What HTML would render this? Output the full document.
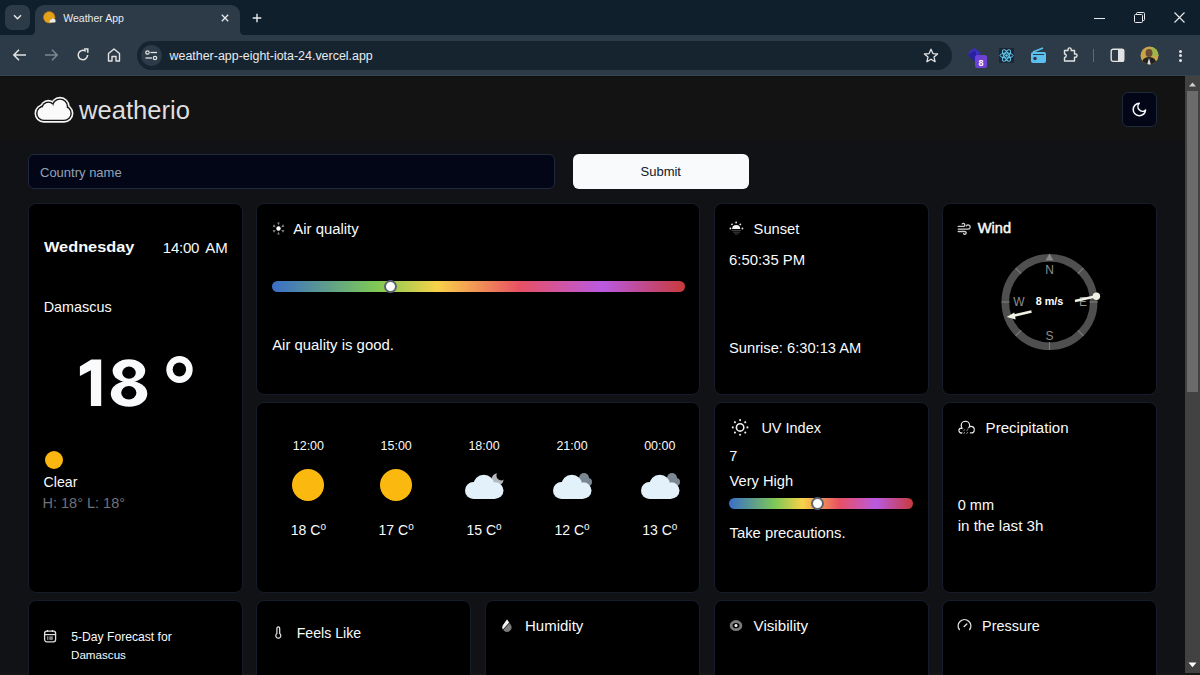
<!DOCTYPE html>
<html><head><meta charset="utf-8"><title>Weather App</title>
<style>
html,body{margin:0;padding:0;width:1200px;height:675px;overflow:hidden;background:#111216}
#root{position:relative;width:1200px;height:675px;overflow:hidden;font-family:"Liberation Sans", sans-serif}
.a{position:absolute;display:block}
.t{position:absolute;white-space:pre;font-family:"Liberation Sans", sans-serif}
</style></head><body><div id="root">
<div class="a" style="left:0px;top:0px;width:1200px;height:35px;background:#0f1f2b"></div>
<div class="a" style="left:5px;top:5px;width:25px;height:25px;background:#2c3b47;border-radius:7px"></div>
<svg class="a" style="left:11px;top:12px" width="13" height="10" viewBox="0 0 13 10"><path d="M3 3.3 L6.5 6.8 L10 3.3" stroke="#e6e6e6" stroke-width="1.5" fill="none"/></svg>
<div class="a" style="left:35px;top:5px;width:205px;height:31px;background:#2c3b47;border-radius:9px 9px 0 0"></div>
<svg class="a" style="left:27px;top:27px" width="9" height="9" viewBox="0 0 9 9"><path d="M0 9 Q9 9 9 0 V9 Z" fill="#2c3b47"/></svg>
<svg class="a" style="left:239px;top:27px" width="9" height="9" viewBox="0 0 9 9"><path d="M9 9 Q0 9 0 0 V9 Z" fill="#2c3b47"/></svg>
<svg class="a" style="left:43px;top:11px" width="13" height="13" viewBox="0 0 13 13"><circle cx="6.2" cy="6.3" r="5.8" fill="#e3a21a"/><circle cx="6.2" cy="6.3" r="5.8" fill="none" stroke="#b07010" stroke-width="0.6"/><path d="M6.5 11.5 Q6.3 8.6 8.6 8.5 Q9.5 7 11 7.8 Q12.8 8 12.6 10 Q12.8 11.5 11.5 11.5 Z" fill="#e8eef2"/></svg>
<div class="t" style="left:63.30px;top:12.91px;font-size:10.5px;line-height:10.5px;color:#e8eaed;font-weight:400;">Weather App</div>
<svg class="a" style="left:221px;top:14px" width="8" height="8" viewBox="0 0 8 8"><path d="M0.8 0.8 L7.2 7.2 M7.2 0.8 L0.8 7.2" stroke="#e8eaed" stroke-width="1.3"/></svg>
<svg class="a" style="left:251.5px;top:12.5px" width="10" height="10" viewBox="0 0 10 10"><path d="M5 0.7 V9.3 M0.7 5 H9.3" stroke="#e8eaed" stroke-width="1.4"/></svg>
<div class="a" style="left:1094px;top:18px;width:11px;height:1px;background:#e8eaed"></div>
<svg class="a" style="left:1134px;top:12px" width="11" height="11" viewBox="0 0 11 11"><rect x="0.5" y="2.5" width="8" height="8" rx="1" fill="none" stroke="#e8eaed" stroke-width="1"/><path d="M2.5 2.5 V1.5 Q2.5 0.5 3.5 0.5 H9.5 Q10.5 0.5 10.5 1.5 V7.5 Q10.5 8.5 9.5 8.5 H8.5" fill="none" stroke="#e8eaed" stroke-width="1"/></svg>
<svg class="a" style="left:1174px;top:12px" width="11" height="11" viewBox="0 0 11 11"><path d="M0.5 0.5 L10.5 10.5 M10.5 0.5 L0.5 10.5" stroke="#e8eaed" stroke-width="1.1"/></svg>
<div class="a" style="left:0px;top:35px;width:1200px;height:41px;background:#2c3b47"></div>
<svg class="a" style="left:13px;top:49px" width="14" height="12" viewBox="0 0 14 12"><path d="M6 0.8 L0.9 6 L6 11.2 M1 6 H13" stroke="#e3e3e3" stroke-width="1.5" fill="none"/></svg>
<svg class="a" style="left:44px;top:49px" width="14" height="12" viewBox="0 0 14 12"><path d="M8 0.8 L13.1 6 L8 11.2 M13 6 H1" stroke="#7d8790" stroke-width="1.5" fill="none"/></svg>
<svg class="a" style="left:76px;top:48px" width="14" height="14" viewBox="0 0 14 14"><path d="M11.6 7 A4.7 4.7 0 1 1 9.8 3.3" stroke="#e3e3e3" stroke-width="1.5" fill="none"/><path d="M8 1 H11.8 V4.8" stroke="#e3e3e3" stroke-width="1.5" fill="none"/></svg>
<svg class="a" style="left:107px;top:48px" width="14" height="14" viewBox="0 0 14 14"><path d="M1.5 13 V5.5 L7 1 L12.5 5.5 V13 H9 V8.5 H5 V13 Z" stroke="#e3e3e3" stroke-width="1.4" fill="none" stroke-linejoin="round"/></svg>
<div class="a" style="left:137px;top:41px;width:815px;height:28.5px;background:#162430;border-radius:14.25px"></div>
<div class="a" style="left:141px;top:45px;width:21px;height:21px;background:#2c3b47;border-radius:50%"></div>
<svg class="a" style="left:145px;top:50px" width="13" height="11" viewBox="0 0 13 11"><circle cx="2.5" cy="2.5" r="1.7" stroke="#e3e3e3" stroke-width="1.2" fill="none"/><path d="M5.5 2.5 H12" stroke="#e3e3e3" stroke-width="1.3"/><circle cx="10" cy="8" r="1.7" stroke="#e3e3e3" stroke-width="1.2" fill="none"/><path d="M0.5 8 H7" stroke="#e3e3e3" stroke-width="1.3"/></svg>
<div class="t" style="left:169.50px;top:49.77px;font-size:12.44px;line-height:12.44px;color:#e8eaed;font-weight:400;">weather-app-eight-iota-24.vercel.app</div>
<svg class="a" style="left:923px;top:48px" width="16" height="15" viewBox="0 0 16 15"><path d="M8 1.2 L9.9 5.6 L14.6 6 L11 9.1 L12.1 13.7 L8 11.2 L3.9 13.7 L5 9.1 L1.4 6 L6.1 5.6 Z" stroke="#e3e3e3" stroke-width="1.3" fill="none" stroke-linejoin="round"/></svg>
<svg class="a" style="left:966px;top:46px" width="24" height="24" viewBox="0 0 24 24"><path d="M2 7 L8 2 L15 7 L8 12 Z" fill="#3a2fc0"/><path d="M2 9 L8 4.5 L10 6 L10 14 L8 15.5 Z" fill="#2a20a0"/><rect x="9" y="9" width="12" height="13" rx="2.5" fill="#6f42d6"/><text x="15" y="19.5" font-family="Liberation Sans" font-weight="700" font-size="9" fill="#fff" text-anchor="middle">8</text></svg>
<svg class="a" style="left:999px;top:48px" width="15" height="15" viewBox="0 0 15 15"><rect x="0" y="0" width="15" height="15" fill="#1c2733"/><g fill="none" stroke="#61c9f0" stroke-width="1"><ellipse cx="7.5" cy="7.5" rx="6.5" ry="2.5"/><ellipse cx="7.5" cy="7.5" rx="6.5" ry="2.5" transform="rotate(60 7.5 7.5)"/><ellipse cx="7.5" cy="7.5" rx="6.5" ry="2.5" transform="rotate(-60 7.5 7.5)"/></g><circle cx="7.5" cy="7.5" r="1.3" fill="#61c9f0"/></svg>
<svg class="a" style="left:1030px;top:47px" width="17" height="17" viewBox="0 0 17 17"><rect x="1" y="5" width="15" height="11" rx="2" fill="#5cc0ee"/><path d="M3 5 L13 1" stroke="#5cc0ee" stroke-width="1.6"/><circle cx="5" cy="11.5" r="1.8" fill="#2c3b47"/><path d="M3 7.5 H14" stroke="#2c3b47" stroke-width="1"/></svg>
<svg class="a" style="left:1062px;top:46px" width="18" height="18" viewBox="0 0 18 18"><path d="M2.5 4.5 H6 V3.5 A1.6 1.6 0 0 1 9.2 3.5 V4.5 H12.5 V8 H13.5 A1.6 1.6 0 0 1 13.5 11.2 H12.5 V15 H2.5 V11.5 A1.6 1.6 0 0 0 2.5 8 Z" stroke="#e3e3e3" stroke-width="1.4" fill="none" stroke-linejoin="round"/></svg>
<div class="a" style="left:1093px;top:49px;width:1px;height:13px;background:#5d6a74"></div>
<svg class="a" style="left:1110px;top:48px" width="15" height="15" viewBox="0 0 15 15"><rect x="1.2" y="1.2" width="12.6" height="12.2" rx="2" stroke="#e3e3e3" stroke-width="1.4" fill="none"/><rect x="8" y="1.2" width="5.8" height="12.2" fill="#e3e3e3"/></svg>
<svg class="a" style="left:1140px;top:46px" width="19" height="19" viewBox="0 0 19 19"><clipPath id="av"><circle cx="9.5" cy="9.5" r="9"/></clipPath><g clip-path="url(#av)"><rect width="19" height="19" fill="#c9a54a"/><rect x="11" y="0" width="8" height="10" fill="#9fb54a"/><ellipse cx="9" cy="7" rx="3.5" ry="4" fill="#6a4a35"/><path d="M1 19 Q2 11 9 11 Q16 11 17 19 Z" fill="#222"/><path d="M7 19 L9 12 L11 19 Z" fill="#ddd"/></g></svg>
<div class="a" style="left:1179px;top:49.5px;width:3px;height:3px;background:#e3e3e3;border-radius:50%"></div>
<div class="a" style="left:1179px;top:54px;width:3px;height:3px;background:#e3e3e3;border-radius:50%"></div>
<div class="a" style="left:1179px;top:59px;width:3px;height:3px;background:#e3e3e3;border-radius:50%"></div>
<div class="a" style="left:0px;top:75px;width:1200px;height:1px;background:#35444f"></div>
<div class="a" style="left:0px;top:76px;width:1185px;height:1px;background:#0e0e0e"></div>
<div class="a" style="left:0px;top:77px;width:1185px;height:65px;background:#131313"></div>
<div class="a" style="left:0px;top:142px;width:1185px;height:531px;background:#111216"></div>
<div class="a" style="left:1185px;top:76px;width:15px;height:597px;background:#424242"></div>
<div class="a" style="left:1187px;top:91px;width:11px;height:301px;background:#6b6b6b"></div>
<svg class="a" style="left:1188px;top:82px" width="9" height="6" viewBox="0 0 9 6"><path d="M1 4.6 L4.5 0.5 L8 4.6 Z" fill="#cfcfcf"/></svg>
<svg class="a" style="left:1188px;top:662px" width="9" height="6" viewBox="0 0 9 6"><path d="M0.5 0.5 L4.5 5.2 L8.5 0.5 Z" fill="#ffffff"/></svg>
<div class="a" style="left:0px;top:673px;width:1200px;height:2px;background:#161616"></div>
<div class="a" style="left:45px;top:673px;width:42px;height:2px;background:#3c3f44"></div>
<div class="a" style="left:91px;top:673px;width:36px;height:2px;background:#3d4a3a"></div>
<svg class="a" style="left:0px;top:0px" width="100" height="140" viewBox="0 0 100 140"><rect x="34.5" y="104.0" width="38.9" height="18.7" rx="9.3" fill="#f5f5f5"/><circle cx="48.4" cy="108.6" r="8.8" fill="#f5f5f5"/><circle cx="60" cy="106.6" r="9.8" fill="#f5f5f5"/><rect x="36.1" y="105.6" width="35.699999999999996" height="15.5" rx="7.699999999999999" fill="#131313"/><circle cx="48.4" cy="108.6" r="7.199999999999999" fill="#131313"/><circle cx="60" cy="106.6" r="8.2" fill="#131313"/><rect x="37.5" y="107" width="32.9" height="12.7" rx="6.3" fill="#fafafa"/><circle cx="48.4" cy="108.6" r="5.8" fill="#fafafa"/><circle cx="60" cy="106.6" r="6.8" fill="#fafafa"/></svg>
<div class="t" style="left:79.00px;top:98.03px;font-size:25.6px;line-height:25.6px;color:#dedede;font-weight:400;">weatherio</div>
<div class="a" style="left:1122px;top:92px;width:35px;height:35px;box-sizing:border-box;background:#020617;border:1px solid #1e293b;border-radius:6px"></div>
<svg class="a" style="left:1132px;top:102px" width="15" height="15" viewBox="0 0 15 15"><path d="M7.3 1.3 A6.2 6.2 0 1 0 13.6 8 A4.6 4.6 0 0 1 7.3 1.3 Z" stroke="#f8fafc" stroke-width="1.5" fill="none" stroke-linejoin="round"/></svg>
<div class="a" style="left:28px;top:154px;width:527px;height:35px;box-sizing:border-box;background:#020617;border:1px solid #1e293b;border-radius:6px"></div>
<div class="t" style="left:40.00px;top:165.60px;font-size:13px;line-height:13px;color:#94a3b8;font-weight:400;">Country name</div>
<div class="a" style="left:573px;top:154px;width:176px;height:35px;background:#f8fafc;border-radius:6px"></div>
<div class="t" style="left:560.75px;width:200px;text-align:center;top:164.80px;font-size:13px;line-height:13px;color:#0f172a;font-weight:400;">Submit</div>
<div class="a" style="left:28px;top:203px;width:215px;height:390.0px;box-sizing:border-box;background:#000;border:1px solid #161c2a;border-radius:8px"></div>
<div class="a" style="left:256px;top:203px;width:444px;height:191.5px;box-sizing:border-box;background:#000;border:1px solid #161c2a;border-radius:8px"></div>
<div class="a" style="left:714px;top:203px;width:215px;height:191.5px;box-sizing:border-box;background:#000;border:1px solid #161c2a;border-radius:8px"></div>
<div class="a" style="left:942px;top:203px;width:215px;height:191.5px;box-sizing:border-box;background:#000;border:1px solid #161c2a;border-radius:8px"></div>
<div class="a" style="left:256px;top:401.5px;width:444px;height:191.5px;box-sizing:border-box;background:#000;border:1px solid #161c2a;border-radius:8px"></div>
<div class="a" style="left:714px;top:401.5px;width:215px;height:191.5px;box-sizing:border-box;background:#000;border:1px solid #161c2a;border-radius:8px"></div>
<div class="a" style="left:942px;top:401.5px;width:215px;height:191.5px;box-sizing:border-box;background:#000;border:1px solid #161c2a;border-radius:8px"></div>
<div class="a" style="left:28px;top:600px;width:215px;height:120px;box-sizing:border-box;background:#000;border:1px solid #161c2a;border-radius:8px"></div>
<div class="a" style="left:256px;top:600px;width:215px;height:120px;box-sizing:border-box;background:#000;border:1px solid #161c2a;border-radius:8px"></div>
<div class="a" style="left:485px;top:600px;width:215px;height:120px;box-sizing:border-box;background:#000;border:1px solid #161c2a;border-radius:8px"></div>
<div class="a" style="left:714px;top:600px;width:215px;height:120px;box-sizing:border-box;background:#000;border:1px solid #161c2a;border-radius:8px"></div>
<div class="a" style="left:942px;top:600px;width:215px;height:120px;box-sizing:border-box;background:#000;border:1px solid #161c2a;border-radius:8px"></div>
<div class="t" style="left:43.50px;top:240.34px;font-size:14.6px;line-height:14.6px;color:#f8fafc;font-weight:700;transform:scaleX(1.118);transform-origin:0 0;">Wednesday</div>
<div class="t" style="left:162.80px;top:240.10px;font-size:15px;line-height:15px;color:#f8fafc;font-weight:400;letter-spacing:-0.25px;">14:00</div>
<div class="t" style="left:205.20px;top:240.10px;font-size:15px;line-height:15px;color:#f8fafc;font-weight:400;">AM</div>
<div class="t" style="left:43.70px;top:299.61px;font-size:14.4px;line-height:14.4px;color:#f8fafc;font-weight:400;">Damascus</div>
<svg class="a" style="left:70px;top:350px" width="130" height="65" viewBox="0 0 130 65"><g transform="translate(-70 -350)" fill="#f8fafc"><path d="M79.9 366.4 L91.3 359.5 L101.2 359.5 L101.2 405.9 L90.9 405.9 L90.9 370.2 L79.9 375.9 Z"/><ellipse cx="128.9" cy="370.9" rx="16.3" ry="11.6"/><ellipse cx="129.05" cy="393.7" rx="18.25" ry="13"/><ellipse cx="129" cy="372.7" rx="6.8" ry="6.1" fill="#000"/><ellipse cx="128.8" cy="392.7" rx="7.6" ry="6.8" fill="#000"/><ellipse cx="179.5" cy="369.5" rx="13.2" ry="13.5"/><ellipse cx="179.4" cy="369.5" rx="6.7" ry="7.1" fill="#000"/></g></svg>
<div class="a" style="left:44.5px;top:451.3px;width:18px;height:18px;background:#fbb60f;border-radius:50%"></div>
<div class="t" style="left:43.50px;top:475.48px;font-size:14.2px;line-height:14.2px;color:#f8fafc;font-weight:400;">Clear</div>
<div class="t" style="left:42.50px;top:496.23px;font-size:14.5px;line-height:14.5px;color:#71717a;font-weight:400;">H: 18° L: 18°</div>
<svg class="a" style="left:270px;top:220px" width="18" height="18" viewBox="0 0 18 18"><g transform="translate(8.5 8.5)"><path d="M0 -3.2 L-1.3 -6 L1.3 -6 Z" fill="#8a8a8a" transform="rotate(0)"/><path d="M0 -3.2 L-1.3 -6 L1.3 -6 Z" fill="#8a8a8a" transform="rotate(60)"/><path d="M0 -3.2 L-1.3 -6 L1.3 -6 Z" fill="#8a8a8a" transform="rotate(120)"/><path d="M0 -3.2 L-1.3 -6 L1.3 -6 Z" fill="#8a8a8a" transform="rotate(180)"/><path d="M0 -3.2 L-1.3 -6 L1.3 -6 Z" fill="#8a8a8a" transform="rotate(240)"/><path d="M0 -3.2 L-1.3 -6 L1.3 -6 Z" fill="#8a8a8a" transform="rotate(300)"/><circle r="2.2" fill="#fff"/></g></svg>
<div class="t" style="left:293.30px;top:221.99px;font-size:14.9px;line-height:14.9px;color:#f8fafc;font-weight:400;">Air quality</div>
<div class="a" style="left:271.5px;top:281px;width:413.5px;height:10.7px;background:linear-gradient(to right, rgb(58,110,200) 0%, rgb(126,200,87) 25%, rgb(248,210,73) 40%, rgb(232,80,100) 60%, rgb(185,90,225) 80%, rgb(200,58,58) 100%);border-radius:6px"></div>
<div class="a" style="left:383.5px;top:279.9px;width:13px;height:13px;box-sizing:border-box;background:#fff;border:2px solid #5a6472;border-radius:50%"></div>
<div class="t" style="left:272.20px;top:337.59px;font-size:14.9px;line-height:14.9px;color:#f8fafc;font-weight:400;">Air quality is good.</div>
<svg class="a" style="left:727px;top:219px" width="20" height="19" viewBox="0 0 20 19"><path d="M5.1 10.1 A4.05 4.2 0 0 1 13.2 10.1 Z" fill="#f2f2f2"/><g fill="#e8e8e8"><circle cx="9.1" cy="3.5" r="0.9"/><circle cx="5" cy="5.3" r="0.9"/><circle cx="13.3" cy="5.4" r="0.9"/><circle cx="3.4" cy="9.5" r="0.9"/><circle cx="15.4" cy="9.5" r="0.9"/></g><g stroke="#3c3c3c" stroke-width="1.1"><path d="M4.5 11.5 H14"/><path d="M6 13.2 H13"/><path d="M7.5 15 H11.5"/></g></svg>
<div class="t" style="left:753.60px;top:221.86px;font-size:14.7px;line-height:14.7px;color:#f8fafc;font-weight:400;">Sunset</div>
<div class="t" style="left:729.00px;top:253.39px;font-size:14.9px;line-height:14.9px;color:#f8fafc;font-weight:400;">6:50:35 PM</div>
<div class="t" style="left:729.00px;top:341.46px;font-size:14.7px;line-height:14.7px;color:#f8fafc;font-weight:400;">Sunrise: 6:30:13 AM</div>
<svg class="a" style="left:955px;top:220px" width="20" height="18" viewBox="0 0 20 18"><g stroke="#d0d0d0" stroke-width="1.3" fill="none" stroke-linecap="round"><path d="M3.2 6.4 H8.2 A1.5 1.5 0 1 0 7.2 3.9"/><path d="M3.2 9.1 H12.8 A2.1 2.1 0 1 0 11.3 5.9"/><path d="M3.2 11.5 H9.6 A1.4 1.4 0 1 1 8.6 13.6"/></g></svg>
<div class="t" style="left:977.80px;top:221.24px;font-size:14.6px;line-height:14.6px;color:#f8fafc;font-weight:401;-webkit-text-stroke:0.45px #f8fafc;">Wind</div>
<svg class="a" style="left:995px;top:250px" width="110" height="110" viewBox="0 0 110 110"><g transform="translate(54.5 52)"><circle r="44.2" fill="none" stroke="#4f4f4f" stroke-width="7.6"/><rect x="-0.6" y="-48" width="1.2" height="8" fill="#7a7a7a" transform="rotate(45)"/><rect x="-0.6" y="-48" width="1.2" height="8" fill="#7a7a7a" transform="rotate(90)"/><rect x="-0.6" y="-48" width="1.2" height="8" fill="#7a7a7a" transform="rotate(135)"/><rect x="-0.6" y="-48" width="1.2" height="8" fill="#7a7a7a" transform="rotate(180)"/><rect x="-0.6" y="-48" width="1.2" height="8" fill="#7a7a7a" transform="rotate(225)"/><rect x="-0.6" y="-48" width="1.2" height="8" fill="#7a7a7a" transform="rotate(270)"/><rect x="-0.6" y="-48" width="1.2" height="8" fill="#7a7a7a" transform="rotate(315)"/><path d="M0 -48.5 L-4 -41.5 L4 -41.5 Z" fill="#8a8a8a"/><g font-family="Liberation Sans" font-size="12" fill="#8f8f8f" text-anchor="middle"><text x="0" y="-28.5">N</text><text x="0" y="38.3">S</text><text x="-30.5" y="4">W</text><text x="33.5" y="4">E</text></g><path d="M25.5 -1 L46.5 -5.7" stroke="#f0f0e6" stroke-width="2.6"/><circle cx="46.9" cy="-5.7" r="3.7" fill="#f0f0e6"/><path d="M-18 9.4 L-37 13.9" stroke="#f0f0e6" stroke-width="2.6"/><path d="M-42.8 15 L-35.2 10.4 L-33.8 17.6 Z" fill="#f0f0e6"/></g></svg>
<div class="t" style="left:1035.70px;top:295.73px;font-size:10.83px;line-height:10.83px;color:#ffffff;font-weight:700;">8 m/s</div>
<div class="t" style="left:208.40px;width:200px;text-align:center;top:440.24px;font-size:12.47px;line-height:12.47px;color:#f8fafc;font-weight:400;">12:00</div>
<div class="a" style="left:292.29999999999995px;top:468.8px;width:32px;height:32px;background:#fbb90f;border-radius:50%"></div>
<div class="t" style="left:208.40px;width:200px;text-align:center;top:522.71px;font-size:14.05px;line-height:14.05px;color:#f8fafc;font-weight:400;">18 C<span style="font-size:10px;position:relative;top:-4.4px">o</span></div>
<div class="t" style="left:296.20px;width:200px;text-align:center;top:440.24px;font-size:12.47px;line-height:12.47px;color:#f8fafc;font-weight:400;">15:00</div>
<div class="a" style="left:380.09999999999997px;top:468.8px;width:32px;height:32px;background:#fbb90f;border-radius:50%"></div>
<div class="t" style="left:296.20px;width:200px;text-align:center;top:522.71px;font-size:14.05px;line-height:14.05px;color:#f8fafc;font-weight:400;">17 C<span style="font-size:10px;position:relative;top:-4.4px">o</span></div>
<div class="t" style="left:384.00px;width:200px;text-align:center;top:440.24px;font-size:12.47px;line-height:12.47px;color:#f8fafc;font-weight:400;">18:00</div>
<svg class="a" style="left:464.7px;top:471.5px" width="40" height="28" viewBox="0 0 40 28"><circle cx="32.6" cy="7.2" r="6" fill="#b4b8bc"/><circle cx="36.3" cy="3.6" r="4.9" fill="#000"/><g fill="#e3f1fa"><circle cx="8.5" cy="18.5" r="8.5"/><circle cx="18.8" cy="13.2" r="10.5"/><circle cx="30.2" cy="18.5" r="8.3"/><rect x="8.5" y="14" width="21.7" height="13"/></g></svg>
<div class="t" style="left:384.00px;width:200px;text-align:center;top:522.71px;font-size:14.05px;line-height:14.05px;color:#f8fafc;font-weight:400;">15 C<span style="font-size:10px;position:relative;top:-4.4px">o</span></div>
<div class="t" style="left:472.00px;width:200px;text-align:center;top:440.24px;font-size:12.47px;line-height:12.47px;color:#f8fafc;font-weight:400;">21:00</div>
<svg class="a" style="left:552.7px;top:471.5px" width="40" height="28" viewBox="0 0 40 28"><circle cx="31" cy="6" r="5" fill="#7b8793"/><circle cx="35" cy="10" r="4" fill="#7b8793"/><g fill="#e3f1fa"><circle cx="8.5" cy="18.5" r="8.5"/><circle cx="18.8" cy="13.2" r="10.5"/><circle cx="30.2" cy="18.5" r="8.3"/><rect x="8.5" y="14" width="21.7" height="13"/></g></svg>
<div class="t" style="left:472.00px;width:200px;text-align:center;top:522.71px;font-size:14.05px;line-height:14.05px;color:#f8fafc;font-weight:400;">12 C<span style="font-size:10px;position:relative;top:-4.4px">o</span></div>
<div class="t" style="left:559.80px;width:200px;text-align:center;top:440.24px;font-size:12.47px;line-height:12.47px;color:#f8fafc;font-weight:400;">00:00</div>
<svg class="a" style="left:640.5px;top:471.5px" width="40" height="28" viewBox="0 0 40 28"><circle cx="31" cy="6" r="5" fill="#7b8793"/><circle cx="35" cy="10" r="4" fill="#7b8793"/><g fill="#e3f1fa"><circle cx="8.5" cy="18.5" r="8.5"/><circle cx="18.8" cy="13.2" r="10.5"/><circle cx="30.2" cy="18.5" r="8.3"/><rect x="8.5" y="14" width="21.7" height="13"/></g></svg>
<div class="t" style="left:559.80px;width:200px;text-align:center;top:522.71px;font-size:14.05px;line-height:14.05px;color:#f8fafc;font-weight:400;">13 C<span style="font-size:10px;position:relative;top:-4.4px">o</span></div>
<svg class="a" style="left:729px;top:416px" width="22" height="22" viewBox="0 0 22 22"><g transform="translate(11.1 11.4)"><circle r="3.7" fill="none" stroke="#f2f2f2" stroke-width="1.6"/><circle cx="0" cy="-7.3" r="1.05" fill="#e6e6e6" transform="rotate(0)"/><circle cx="0" cy="-7.3" r="1.05" fill="#e6e6e6" transform="rotate(45)"/><circle cx="0" cy="-7.3" r="1.05" fill="#e6e6e6" transform="rotate(90)"/><circle cx="0" cy="-7.3" r="1.05" fill="#e6e6e6" transform="rotate(135)"/><circle cx="0" cy="-7.3" r="1.05" fill="#e6e6e6" transform="rotate(180)"/><circle cx="0" cy="-7.3" r="1.05" fill="#e6e6e6" transform="rotate(225)"/><circle cx="0" cy="-7.3" r="1.05" fill="#e6e6e6" transform="rotate(270)"/><circle cx="0" cy="-7.3" r="1.05" fill="#e6e6e6" transform="rotate(315)"/></g></svg>
<div class="t" style="left:761.40px;top:421.43px;font-size:14.49px;line-height:14.49px;color:#f8fafc;font-weight:400;">UV Index</div>
<div class="t" style="left:729.30px;top:449.33px;font-size:14.5px;line-height:14.5px;color:#f8fafc;font-weight:400;">7</div>
<div class="t" style="left:729.60px;top:474.18px;font-size:14.67px;line-height:14.67px;color:#f8fafc;font-weight:400;">Very High</div>
<div class="a" style="left:728.8px;top:498.3px;width:184.7px;height:10.5px;background:linear-gradient(to right, rgb(58,110,200) 0%, rgb(126,200,87) 25%, rgb(248,210,73) 40%, rgb(232,80,100) 60%, rgb(185,90,225) 80%, rgb(200,58,58) 100%);border-radius:6px"></div>
<div class="a" style="left:810.7px;top:497px;width:13px;height:13px;box-sizing:border-box;background:#fff;border:2px solid #5a6472;border-radius:50%"></div>
<div class="t" style="left:729.60px;top:526.27px;font-size:14.8px;line-height:14.8px;color:#f8fafc;font-weight:400;">Take precautions.</div>
<svg class="a" style="left:955px;top:418px" width="23" height="20" viewBox="0 0 23 20"><circle cx="6.4" cy="12.6" r="2.4" fill="none" stroke="#e6e6e6" stroke-width="1.35" /><circle cx="10.4" cy="7.5" r="4.1" fill="none" stroke="#e6e6e6" stroke-width="1.35" /><circle cx="16.0" cy="11.7" r="3.2" fill="none" stroke="#e6e6e6" stroke-width="1.35" /><circle cx="6.4" cy="12.6" r="1.7199999999999998" fill="#000" /><circle cx="10.4" cy="7.5" r="3.4199999999999995" fill="#000" /><circle cx="16.0" cy="11.7" r="2.52" fill="#000" /><rect x="7.3" y="10.4" width="7.6" height="7" fill="#000"/><g stroke="#9a9a9a" stroke-width="0.9" stroke-linecap="round"><path d="M9.6 11.6 L8.8 12.8"/><path d="M12.6 11.6 L11.8 12.8"/><path d="M9.6 14.4 L8.8 15.6"/><path d="M12.6 14.4 L11.8 15.6"/></g></svg>
<div class="t" style="left:985.60px;top:420.33px;font-size:15.08px;line-height:15.08px;color:#f8fafc;font-weight:400;">Precipitation</div>
<div class="t" style="left:957.70px;top:498.11px;font-size:14.52px;line-height:14.52px;color:#f8fafc;font-weight:400;">0 mm</div>
<div class="t" style="left:957.70px;top:518.21px;font-size:15.11px;line-height:15.11px;color:#f8fafc;font-weight:400;">in the last 3h</div>
<svg class="a" style="left:41px;top:627px" width="18" height="18" viewBox="0 0 18 18"><rect x="3.6" y="4.2" width="11" height="10.6" rx="2.2" stroke="#e0e0e0" stroke-width="1.3" fill="none"/><path d="M3.6 7.6 H14.6" stroke="#e0e0e0" stroke-width="1.2"/><path d="M6.5 3 V5 M11.5 3 V5" stroke="#e0e0e0" stroke-width="1.2"/><rect x="6.3" y="9.3" width="1" height="3.6" fill="#bbb"/><rect x="8.3" y="9.3" width="3.5" height="3.6" fill="#888"/></svg>
<div class="t" style="left:71.25px;top:630.97px;font-size:12.15px;line-height:12.15px;color:#f8fafc;font-weight:400;">5-Day Forecast for</div>
<div class="t" style="left:71.00px;top:648.90px;font-size:11.64px;line-height:11.64px;color:#f8fafc;font-weight:400;">Damascus</div>
<svg class="a" style="left:272px;top:624px" width="12" height="18" viewBox="0 0 12 18"><path d="M4.9 9.6 V4.2 A1.4 1.4 0 0 1 7.7 4.2 V9.6 A2.5 2.5 0 1 1 4.9 9.6 Z" stroke="#e8e8e8" stroke-width="1.2" fill="none"/></svg>
<div class="t" style="left:296.70px;top:626.41px;font-size:14.17px;line-height:14.17px;color:#f8fafc;font-weight:400;">Feels Like</div>
<svg class="a" style="left:498px;top:615px" width="18" height="20" viewBox="0 0 18 20"><defs><clipPath id="hu1"><path d="M0 0 H18.5 L0.35 20 H0 Z"/></clipPath></defs><path d="M9 4.4 L12.7 9.8 A4.5 4.5 0 1 1 5.3 9.8 Z" fill="#7a7a7a"/><path d="M9 4.4 L12.7 9.8 A4.5 4.5 0 1 1 5.3 9.8 Z" fill="#f5f5f5" clip-path="url(#hu1)"/><path d="M18.5 0 L0.35 20" stroke="#000" stroke-width="0.9"/></svg>
<div class="t" style="left:525.00px;top:618.01px;font-size:14.99px;line-height:14.99px;color:#f8fafc;font-weight:400;">Humidity</div>
<svg class="a" style="left:727px;top:617px" width="18" height="17" viewBox="0 0 18 17"><ellipse cx="9" cy="8.6" rx="4.9" ry="4.1" fill="none" stroke="#7a7a7a" stroke-width="2.8"/><circle cx="9" cy="8.6" r="1.5" fill="#fff"/></svg>
<div class="t" style="left:753.60px;top:618.46px;font-size:15.17px;line-height:15.17px;color:#f8fafc;font-weight:400;">Visibility</div>
<svg class="a" style="left:954px;top:615px" width="20" height="20" viewBox="0 0 20 20"><path d="M5.4 14.6 A6.3 6.3 0 1 1 15.6 14.6" stroke="#e0e0e0" stroke-width="1.4" fill="none" stroke-linecap="round"/><path d="M10.2 11.5 L12.8 9" stroke="#e0e0e0" stroke-width="1.4" stroke-linecap="round"/></svg>
<div class="t" style="left:982.10px;top:619.09px;font-size:14.42px;line-height:14.42px;color:#f8fafc;font-weight:400;">Pressure</div>
</div></body></html>
